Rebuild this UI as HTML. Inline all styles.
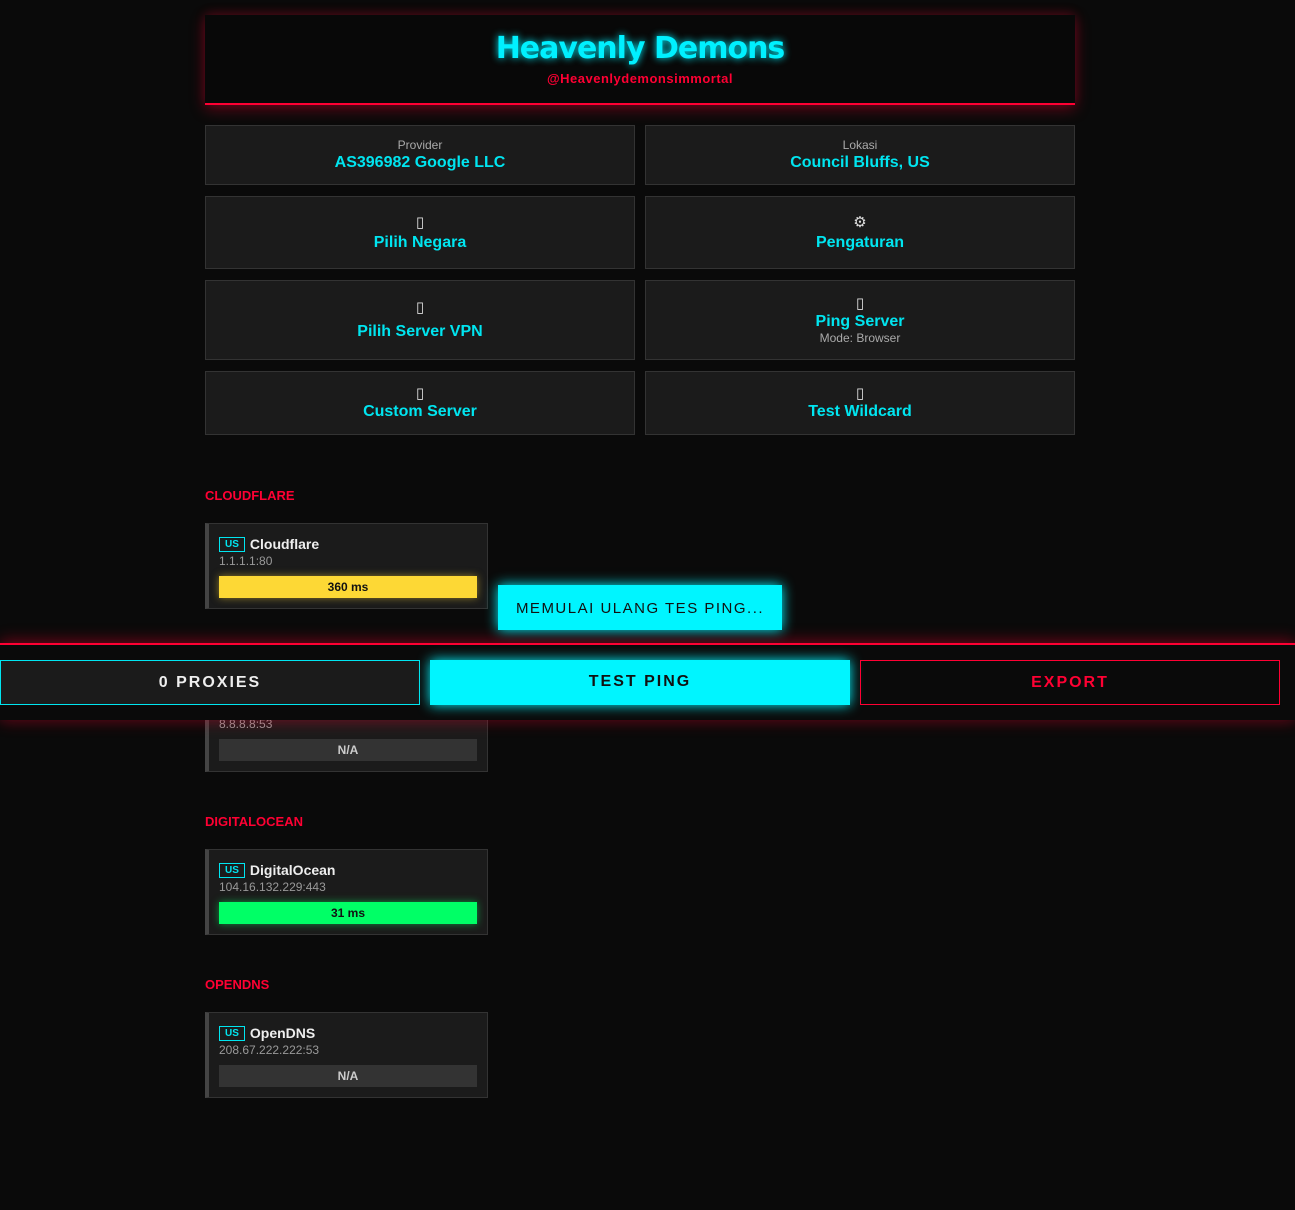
<!DOCTYPE html>
<html><head><meta charset="utf-8"><style>
*{box-sizing:border-box;margin:0;padding:0}
body{background:#0a0a0a;width:1295px;height:1210px;overflow:hidden;font-family:"Liberation Sans","DejaVu Sans",sans-serif;position:relative;color:#ddd}
.wrap{position:absolute;left:205px;width:870px;top:15px}
.hdr{height:90px;background:#080808;border-bottom:2px solid #ff0033;box-shadow:0 4px 14px rgba(255,0,51,.35),0 -2px 10px rgba(255,0,51,.15);text-align:center}
.hdr h1{font-size:30px;color:#00f0ff;padding-top:17px;letter-spacing:-1px;text-shadow:0 0 8px #00f0ff;font-weight:bold;font-family:"DejaVu Sans",sans-serif;line-height:34px}
.hdr p{color:#ff0033;font-size:13px;font-weight:bold;margin-top:5px;letter-spacing:.5px}
.grid{display:grid;grid-template-columns:430px 430px;column-gap:10px;margin-top:20px;row-gap:11px}
.c{background:#1b1b1b;border:1px solid #333;text-align:center;display:flex;flex-direction:column;justify-content:center}
.c small{font-size:12px;color:#aaa}
.c b{color:#00e5f0;font-size:16px}
.c i{font-style:normal;color:#ddd;font-size:15px;line-height:18px}
.lbl{position:absolute;left:205px;color:#ff0033;font-size:13px;font-weight:bold}
.card{position:absolute;left:205px;width:283px;height:86px;background:#1b1b1b;border:1px solid #333;border-left:4px solid #444;padding:12px 10px 0 10px}
.card .t{display:flex;align-items:center;font-size:14px;font-weight:bold;color:#eee}
.card .t span{border:1px solid #00e5f0;color:#00e5f0;font-size:10px;padding:1px 5px;margin-right:5px}
.card .ip{font-size:12px;color:#999;margin-top:2px}
.bar{margin-top:8px;height:22px;width:258px;font-size:12px;font-weight:bold;text-align:center;line-height:22px;color:#111}
.foot{position:absolute;left:0;top:643px;width:1295px;height:77px;background:#0a0a0a;border-top:2px solid #ff0033;box-shadow:0 -4px 14px rgba(255,0,51,.3),0 4px 14px rgba(255,0,51,.2)}
.btn{position:absolute;top:15px;height:45px;width:420px;text-align:center;line-height:43px;font-weight:bold;font-size:16px;letter-spacing:2px}
</style></head><body>
<div class="wrap">
<div class="hdr"><h1>Heavenly Demons</h1><p>@Heavenlydemonsimmortal</p></div>
<div class="grid">
<div class="c" style="height:60px"><small>Provider</small><b style="margin-top:2px">AS396982 Google LLC</b></div>
<div class="c" style="height:60px"><small>Lokasi</small><b style="margin-top:2px">Council Bluffs, US</b></div>
<div class="c" style="height:73px"><i>▯</i><b style="margin-top:2px">Pilih Negara</b></div>
<div class="c" style="height:73px"><i>⚙</i><b style="margin-top:2px">Pengaturan</b></div>
<div class="c" style="height:80px"><i>▯</i><b style="margin-top:6px">Pilih Server VPN</b></div>
<div class="c" style="height:80px"><i>▯</i><b>Ping Server</b><small>Mode: Browser</small></div>
<div class="c" style="height:64px"><i>▯</i><b>Custom Server</b></div>
<div class="c" style="height:64px"><i>▯</i><b>Test Wildcard</b></div>
</div></div>
<div class="lbl" style="top:488px">CLOUDFLARE</div>
<div class="card" style="top:523px"><div class="t"><span>US</span>Cloudflare</div><div class="ip">1.1.1.1:80</div><div class="bar" style="background:#fdd835;box-shadow:0 0 8px rgba(253,216,53,.5)">360 ms</div></div>
<div class="card" style="top:686px"><div class="t"><span>US</span>Google</div><div class="ip">8.8.8.8:53</div><div class="bar" style="background:#333;color:#ccc">N/A</div></div>
<div class="lbl" style="top:814px">DIGITALOCEAN</div>
<div class="card" style="top:849px"><div class="t"><span>US</span>DigitalOcean</div><div class="ip">104.16.132.229:443</div><div class="bar" style="background:#00ff66;box-shadow:0 0 8px rgba(0,255,102,.5)">31 ms</div></div>
<div class="lbl" style="top:977px">OPENDNS</div>
<div class="card" style="top:1012px"><div class="t"><span>US</span>OpenDNS</div><div class="ip">208.67.222.222:53</div><div class="bar" style="background:#333;color:#ccc">N/A</div></div>
<div style="position:absolute;left:498px;top:585px;width:284px;height:45px;background:#00f5ff;box-shadow:0 0 12px #00f5ff;color:#111;font-size:15px;letter-spacing:1.5px;text-align:center;line-height:47px;z-index:3">MEMULAI ULANG TES PING...</div>
<div class="foot">
<div class="btn" style="left:0;background:#1b1b1b;border:1px solid #00e5f0;color:#eee">0 PROXIES</div>
<div class="btn" style="left:430px;background:#00f5ff;color:#111;box-shadow:0 0 12px #00f5ff">TEST PING</div>
<div class="btn" style="left:860px;border:1px solid #ff0033;color:#ff0033">EXPORT</div>
</div>
</body></html>
